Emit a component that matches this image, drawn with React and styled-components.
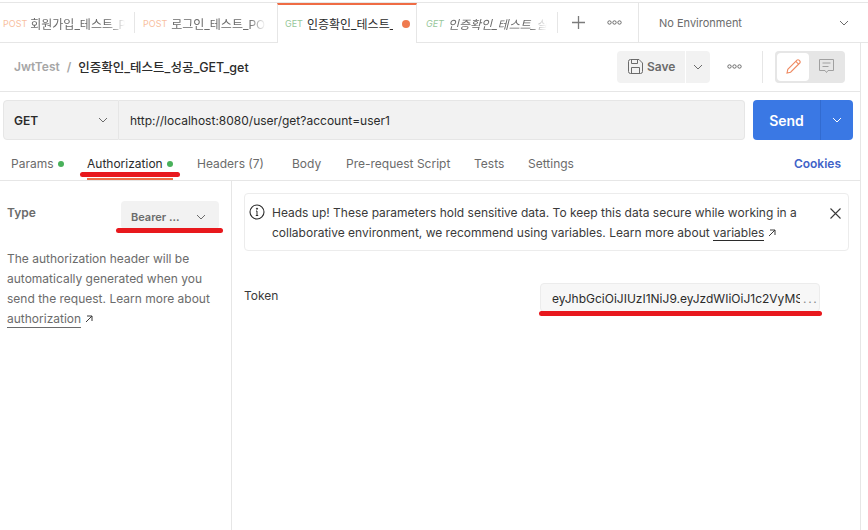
import React from "react";
import styled, { createGlobalStyle } from "styled-components";

const Global = createGlobalStyle`
  html, body { margin: 0; padding: 0; background: #fff; }
  body {
    font-family: Inter, "Noto Sans CJK KR", sans-serif;
    color: #6b6b6b;
    width: 868px;
    height: 530px;
    overflow: hidden;
  }
  * { box-sizing: border-box; }
`;

const Chevron = ({ color = "#6b6b6b" }) => (
  <svg width="10" height="6" viewBox="0 0 10 6" fill="none">
    <path d="M1 1l4 4 4-4" stroke={color} strokeWidth="1" />
  </svg>
);

const Dots = () => (
  <svg width="15" height="5" viewBox="0 0 15 5" fill="none" stroke="#6b6b6b">
    <circle cx="2.5" cy="2.5" r="1.7" />
    <circle cx="7.5" cy="2.5" r="1.7" />
    <circle cx="12.5" cy="2.5" r="1.7" />
  </svg>
);

const OutArrow = () => (
  <svg width="8" height="8" viewBox="0 0 8 8" fill="none" stroke="#3a3a3a">
    <path d="M1 7l6-6M2 1h5v5" />
  </svg>
);

function App() {
  return (
    <Page>
      <Global />
      <TabBar>
        <Tab $w={135} $gap={3} $divider>
          <Method $color="#f8bf9f">POST</Method>
          <TabName>회원가입_테스트_P</TabName>
        </Tab>
        <Tab $w={142} $pad={8}>
          <Method $color="#f8bf9f">POST</Method>
          <TabName>로그인_테스트_POS</TabName>
        </Tab>
        <ActiveTab $w={140}>
          <Method $color="#96c79a">GET</Method>
          <TabName $dark $max={86} $plain>인증확인_테스트_</TabName>
          <Unsaved />
        </ActiveTab>
        <Tab $w={141} $pad={9} $divider>
          <Method $color="#96c79a" $italic>GET</Method>
          <TabName $italic $max={99}>인증확인_테스트_실</TabName>
        </Tab>
        <PlusSlot>
          <svg width="13" height="13" viewBox="0 0 13 13" stroke="#7b7b7b" strokeWidth="1.3">
            <path d="M6.5 0v13M0 6.5h13" />
          </svg>
        </PlusSlot>
        <MoreSlot>
          <Dots />
        </MoreSlot>
        <EnvSelect>
          <span>No Environment</span>
          <Chevron />
        </EnvSelect>
      </TabBar>

      <Main>
        <Header>
          <Crumbs>
            <Collection>JwtTest</Collection>
            <Slash>/</Slash>
            <RequestName>인증확인_테스트_성공_GET_get</RequestName>
          </Crumbs>
          <Actions>
            <SaveButton>
              <svg width="15" height="15" viewBox="0 0 15 15" fill="none" stroke="#6b6b6b">
                <path d="M.5 2.5a2 2 0 0 1 2-2h8.5l3.5 3.5v8.500a2 2 0 0 1-2 2h-10a2 2 0 0 1-2-2z" />
                <path d="M3.500 .5v4h6v-4M3.500 14.500v-6h8v6" />
              </svg>
              Save
            </SaveButton>
            <SaveMenu>
              <Chevron />
            </SaveMenu>
            <HeaderMore>
              <Dots />
            </HeaderMore>
            <ModeSwitch>
              <ModeOn>
                <svg width="15" height="15" viewBox="0 0 15 15" fill="none" stroke="#ef8a62" strokeWidth="1.100">
                  <path d="M1 14l.8-3.600L11 1.200a1.400 1.400 0 0 1 2 0l.8.800a1.400 1.400 0 0 1 0 2L4.600 13.200z" />
                  <path d="M9.800 2.400l2.800 2.800" />
                </svg>
              </ModeOn>
              <ModeOff>
                <svg width="15" height="15" viewBox="0 0 15 15" fill="none" stroke="#a0a0a0">
                  <path d="M.5.5h14v11H9l-1.500 2-1.500-2H.5z" />
                  <path d="M3.500 4h8M3.500 7.500h6" />
                </svg>
              </ModeOff>
            </ModeSwitch>
          </Actions>
        </Header>

        <UrlRow>
          <MethodSelect>
            <span>GET</span>
            <Chevron />
          </MethodSelect>
          <UrlField>http://localhost:8080/user/get?account=user1</UrlField>
          <SendGroup>
            <SendLabel>Send</SendLabel>
            <SendMenu>
              <Chevron color="#fff" />
            </SendMenu>
          </SendGroup>
        </UrlRow>

        <ReqTabs>
          <ReqTab $w={76}>
            Params
            <GreenDot />
          </ReqTab>
          <ReqTab $w={110} $active>
            Authorization
            <GreenDot />
            <Underline />
            <RedMark $left={-7} $top={32} $width={100} />
          </ReqTab>
          <ReqTab $w={95}>Headers (7)</ReqTab>
          <ReqTab $w={54}>Body</ReqTab>
          <ReqTab $w={128}>Pre-request Script</ReqTab>
          <ReqTab $w={54}>Tests</ReqTab>
          <ReqTab $w={60}>Settings</ReqTab>
          <Cookies>Cookies</Cookies>
        </ReqTabs>

        <Body>
          <Sidebar>
            <TypeRow>
              <TypeLabel>Type</TypeLabel>
              <TypeSelect>
                <span>Bearer ...</span>
                <Chevron />
                <RedMark $left={-5} $top={27} $width={107} />
              </TypeSelect>
            </TypeRow>
            <Help>
              The authorization header will be automatically generated when you send the request. Learn more about{" "}
              <HelpLink>authorization</HelpLink> <OutArrow />
            </Help>
          </Sidebar>

          <Content>
            <Notice>
              <svg width="16" height="16" viewBox="0 0 16 16" fill="none" stroke="#2b2b2b">
                <circle cx="8" cy="8" r="7" strokeWidth="1.100" />
                <path d="M8 7v4.500M6.800 11.500h2.400M7 7h1" />
                <circle cx="8" cy="4.700" r=".6" fill="#2b2b2b" />
              </svg>
              <NoticeText>
                Heads up! These parameters hold sensitive data. To keep this data secure while working in a collaborative
                environment, we recommend using variables. Learn more about <NoticeLink>variables</NoticeLink>{" "}
                <OutArrow />
              </NoticeText>
              <Close>
                <svg width="11" height="11" viewBox="0 0 11 11" stroke="#3a3a3a" strokeWidth="1.100">
                  <path d="M.5.5l10 10M10.500.5l-10 10" />
                </svg>
              </Close>
            </Notice>
            <TokenRow>
              <TokenLabel>Token</TokenLabel>
              <TokenField>
                <TokenValue>eyJhbGciOiJIUzI1NiJ9.eyJzdWIiOiJ1c2VyMS</TokenValue>
                <TokenDots>...</TokenDots>
                <RedMark $left={-2} $top={27} $width={283} />
              </TokenField>
            </TokenRow>
          </Content>
        </Body>
      </Main>
    </Page>
  );
}

export default App;

const Page = styled.div`
  width: 868px;
  height: 530px;
  padding-top: 2px;
  display: flex;
  flex-direction: column;
`;

const TabBar = styled.div`
  height: 41px;
  flex: none;
  display: flex;
  border-top: 1px solid #e6e6e6;
  border-bottom: 1px solid #e6e6e6;
`;

const Tab = styled.div`
  position: relative;
  width: ${(p) => p.$w}px;
  flex: none;
  display: flex;
  align-items: center;
  padding: 1px 0 0 ${(p) => p.$pad || 3}px;
  gap: ${(p) => p.$gap || 4}px;
  overflow: hidden;
  white-space: nowrap;
  &::after {
    content: "";
    display: ${(p) => (p.$divider ? "block" : "none")};
    position: absolute;
    right: 0;
    top: 9px;
    bottom: 9px;
    width: 1px;
    background: #e6e6e6;
  }
`;

const ActiveTab = styled(Tab)`
  padding: 0 0 1px 7px;
  height: 40px;
  border-left: 1px solid #e6e6e6;
  border-right: 1px solid #e6e6e6;
  border-top: 2px solid #ef6c45;
  background: #fff;
  margin-bottom: -1px;
  z-index: 1;
  gap: 4px;
`;

const Method = styled.span`
  font-size: 9px;
  color: ${(p) => p.$color};
  font-style: ${(p) => (p.$italic ? "italic" : "normal")};
  flex: none;
`;

const TabName = styled.span`
  font-size: 12px;
  color: ${(p) => (p.$dark ? "#2b2b2b" : "#6b6b6b")};
  font-style: ${(p) => (p.$italic ? "italic" : "normal")};
  overflow: hidden;
  flex: none;
  width: ${(p) => p.$max || 95}px;
  mask-image: ${(p) => (p.$plain ? "none" : "linear-gradient(to right, #000 82%, transparent)")};
`;

const Unsaved = styled.i`
  width: 8px;
  height: 8px;
  border-radius: 50%;
  background: #ef7a4f;
  margin-left: 5px;
  flex: none;
`;

const PlusSlot = styled.div`
  width: 41px;
  display: flex;
  align-items: center;
  justify-content: center;
  flex: none;
`;

const MoreSlot = styled.div`
  width: 40px;
  border-right: 1px solid #e6e6e6;
  display: flex;
  align-items: center;
  justify-content: flex-start;
  padding-left: 8px;
  flex: none;
`;

const EnvSelect = styled.div`
  flex: 1;
  display: flex;
  align-items: center;
  justify-content: space-between;
  padding: 0 19px 0 20px;
  font-size: 11px;
  color: #6b6b6b;
`;

const Main = styled.div`
  width: 861px;
  flex: 1;
  display: flex;
  flex-direction: column;
  border-right: 1px solid #e6e6e6;
`;

const Header = styled.div`
  height: 49px;
  flex: none;
  display: flex;
  align-items: center;
  justify-content: space-between;
  border-bottom: 1px solid #e6e6e6;
  padding: 0 15px 1px 14px;
`;

const Crumbs = styled.div`
  display: flex;
  align-items: center;
  font-size: 12px;
  font-weight: 600;
`;

const Collection = styled.span`
  color: #a6a6a6;
`;

const Slash = styled.span`
  color: #a6a6a6;
  margin: 0 7px;
`;

const RequestName = styled.span`
  color: #2b2b2b;
  font-size: 12.500px;
  font-weight: 500;
`;

const Actions = styled.div`
  display: flex;
  align-items: center;
`;

const SaveButton = styled.div`
  width: 68px;
  height: 32px;
  background: #f2f2f2;
  border-radius: 4px 0 0 4px;
  display: flex;
  align-items: center;
  padding-left: 11px;
  gap: 4px;
  font-size: 12px;
  font-weight: 600;
  color: #6b6b6b;
`;

const SaveMenu = styled.div`
  width: 24px;
  height: 32px;
  margin-left: 1px;
  background: #f2f2f2;
  border-radius: 0 4px 4px 0;
  display: flex;
  align-items: center;
  justify-content: center;
`;

const HeaderMore = styled.div`
  width: 53px;
  height: 32px;
  margin-right: 12px;
  border-right: 1px solid #e6e6e6;
  display: flex;
  align-items: center;
  padding-left: 17px;
`;

const ModeSwitch = styled.div`
  width: 70px;
  height: 32px;
  padding: 2px;
  background: #e6e6e6;
  border-radius: 4px;
  display: flex;
`;

const ModeOn = styled.div`
  width: 32px;
  background: #fff;
  border-radius: 4px;
  display: flex;
  align-items: center;
  justify-content: center;
`;

const ModeOff = styled(ModeOn)`
  width: 34px;
  background: transparent;
`;

const UrlRow = styled.div`
  display: flex;
  height: 40px;
  flex: none;
  margin: 8px 7px 0 3px;
`;

const MethodSelect = styled.div`
  width: 116px;
  display: flex;
  align-items: center;
  justify-content: space-between;
  padding: 0 10px;
  background: #f2f2f2;
  border: 1px solid #e6e6e6;
  border-radius: 4px 0 0 4px;
  font-size: 12px;
  font-weight: 600;
  color: #2b2b2b;
`;

const UrlField = styled.div`
  width: 626px;
  display: flex;
  align-items: center;
  padding-left: 11px;
  background: #f2f2f2;
  border: 1px solid #e6e6e6;
  border-left: 0;
  border-radius: 0 4px 4px 0;
  font-size: 12px;
  color: #2b2b2b;
`;

const SendGroup = styled.div`
  width: 100px;
  margin-left: 8px;
  display: flex;
  background: #3a78e4;
  border-radius: 4px;
  color: #fff;
`;

const SendLabel = styled.div`
  width: 68px;
  display: flex;
  align-items: center;
  justify-content: center;
  font-size: 14px;
  font-weight: 600;
  border-right: 1px solid #326bd0;
`;

const SendMenu = styled.div`
  flex: 1;
  display: flex;
  align-items: center;
  justify-content: center;
`;

const ReqTabs = styled.div`
  height: 41px;
  flex: none;
  display: flex;
  padding: 0 19px 0 11px;
  border-bottom: 1px solid #e6e6e6;
`;

const ReqTab = styled.div`
  position: relative;
  width: ${(p) => p.$w}px;
  padding-top: 7px;
  flex: none;
  display: flex;
  align-items: center;
  gap: 4px;
  font-size: 12px;
  color: ${(p) => (p.$active ? "#2b2b2b" : "#6b6b6b")};
`;

const GreenDot = styled.i`
  width: 6px;
  height: 6px;
  border-radius: 50%;
  background: #49b15b;
  margin-top: 1px;
`;

const Underline = styled.i`
  position: absolute;
  left: 0;
  top: 38px;
  width: 86px;
  height: 2px;
  background: #ef6c45;
`;

const RedMark = styled.i`
  position: absolute;
  left: ${(p) => p.$left}px;
  top: ${(p) => p.$top}px;
  width: ${(p) => p.$width}px;
  height: 5px;
  border-radius: 3px;
  background: #e8181d;
  z-index: 2;
`;

const Cookies = styled.div`
  margin: 7px 0 0 auto;
  align-self: center;
  font-size: 12px;
  font-weight: 600;
  color: #3f63c8;
`;

const Body = styled.div`
  flex: 1;
  display: flex;
`;

const Sidebar = styled.div`
  width: 232px;
  flex: none;
  padding: 20px 12px 0 7px;
  border-right: 1px solid #e6e6e6;
`;

const TypeRow = styled.div`
  display: flex;
  justify-content: space-between;
  align-items: flex-start;
`;

const TypeLabel = styled.div`
  font-size: 12px;
  font-weight: 600;
  color: #6b6b6b;
  margin-top: 4px;
`;

const TypeSelect = styled.div`
  position: relative;
  width: 98px;
  height: 28px;
  background: #f2f2f2;
  border-radius: 4px;
  display: flex;
  align-items: center;
  justify-content: space-between;
  padding: 4px 13px 0 10px;
  font-size: 11px;
  font-weight: 600;
  color: #6b6b6b;
`;

const Help = styled.div`
  margin-top: 20px;
  font-size: 12px;
  line-height: 20px;
  color: #6b6b6b;
`;

const HelpLink = styled.span`
  border-bottom: 1px solid #6b6b6b;
  padding-bottom: 1px;
`;

const Content = styled.div`
  flex: 1;
  padding: 12px 11px 0 12px;
`;

const Notice = styled.div`
  height: 58px;
  display: flex;
  padding: 10px 7px 0 4px;
  gap: 6px;
  border: 1px solid #ececec;
  border-radius: 4px;
`;

const NoticeText = styled.div`
  width: 545px;
  margin: -1px 0 0 1px;
  flex: none;
  font-size: 12px;
  line-height: 20px;
  color: #3a3a3a;
`;

const NoticeLink = styled.span`
  border-bottom: 1px solid #2b2b2b;
`;

const Close = styled.div`
  display: flex;
  height: 11px;
  margin: 4px 0 0 auto;
`;

const TokenRow = styled.div`
  margin-top: 32px;
  display: flex;
  justify-content: space-between;
  padding-right: 29px;
`;

const TokenLabel = styled.div`
  font-size: 12px;
  color: #3a3a3a;
  margin-top: 5px;
`;

const TokenField = styled.div`
  position: relative;
  width: 280px;
  height: 29px;
  display: flex;
  align-items: center;
  padding: 1px 0 0 11px;
  background: #f7f7f7;
  border: 1px solid #ececec;
  border-radius: 4px;
  font-size: 12px;
  color: #2b2b2b;
`;

const TokenValue = styled.span`
  display: block;
  flex: none;
  width: 248px;
  overflow: hidden;
  white-space: nowrap;
`;

const TokenDots = styled.span`
  flex: none;
  margin-left: 3px;
  letter-spacing: 1.700px;
  color: #8a8a8a;
`;
